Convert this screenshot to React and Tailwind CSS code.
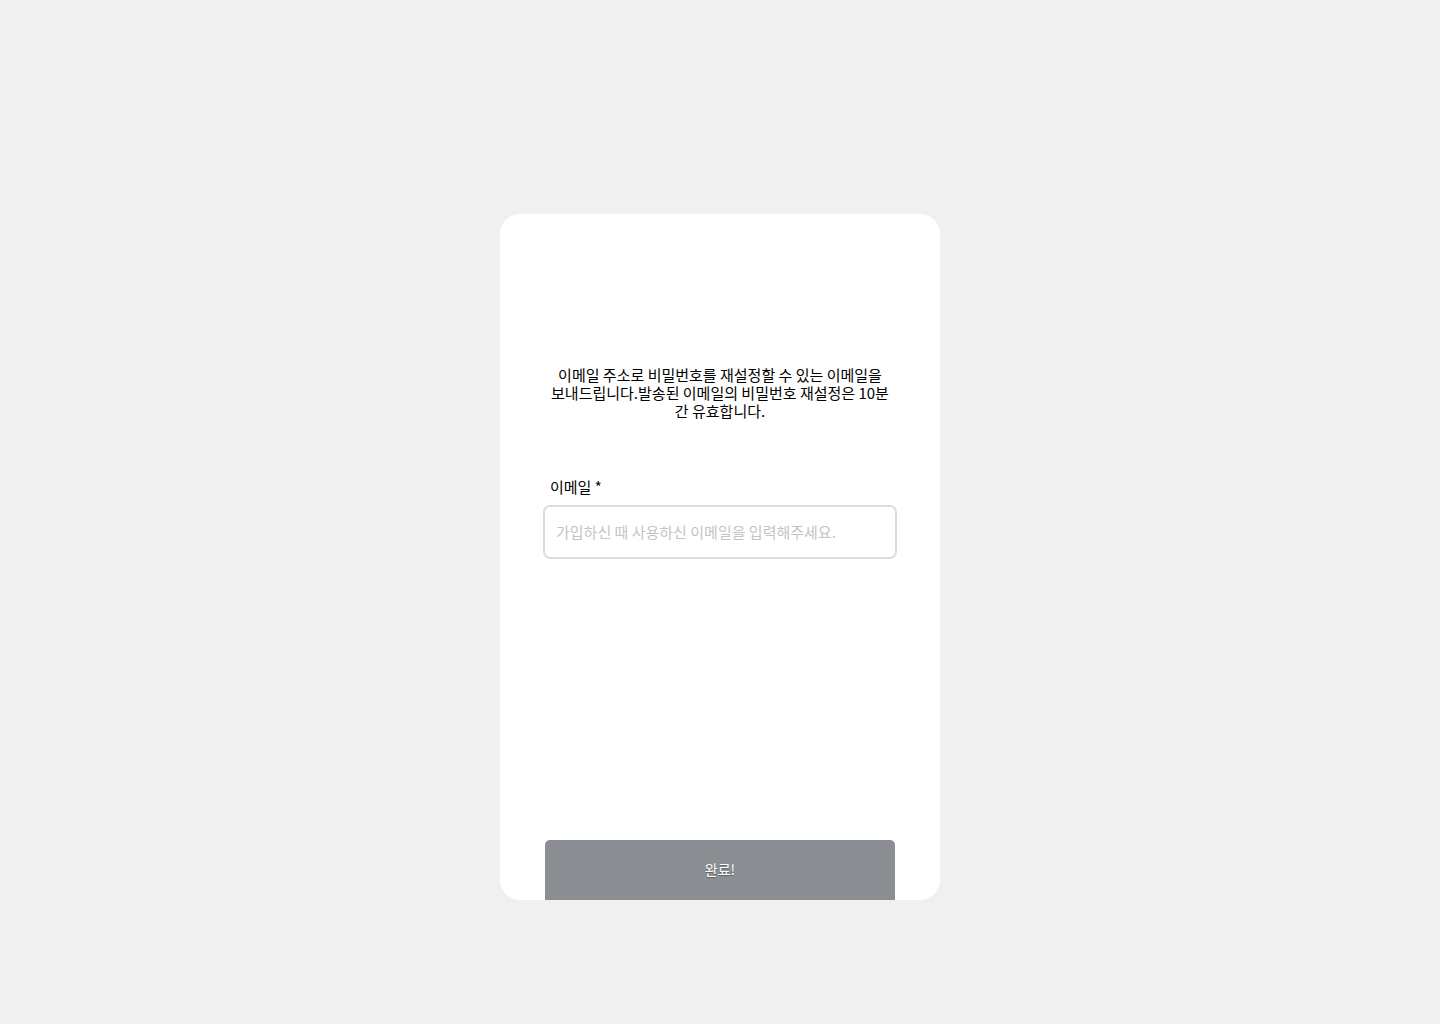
export default function App() {
  return (
    <div
      className="min-h-screen w-full bg-[#f0f0f0] pt-[214px]"
      style={{ fontFamily: '"Noto Sans CJK KR", "Noto Sans", sans-serif' }}
    >
      <div className="mx-auto flex h-[686px] w-[440px] flex-col overflow-hidden rounded-[20px] bg-white px-[45px]">
        <p className="-mx-[2px] mt-[152px] break-keep text-center text-[15px] leading-[18px] text-black">
          이메일 주소로 비밀번호를 재설정할 수 있는 이메일을 보내드립니다.발송된 이메일의 비밀번호 재설정은 10분 간 유효합니다.
        </p>

        <label className="mt-[58px] block pl-[5px] text-[15px] leading-[18px] text-black">
          이메일 *
        </label>
        <input
          type="email"
          placeholder="가입하신 때 사용하신 이메일을 입력해주세요."
          className="-mx-[2px] mt-[9px] h-[54px] rounded-[7px] border-2 border-[#dcdcdc] px-[11px] pb-[2px] text-[15px] text-black outline-none placeholder:text-[#c4c4c4]"
        />

        <div className="flex-1" />

        <button
          type="button"
          className="h-[60px] shrink-0 rounded-t-[5px] bg-[#8b8e93] pb-[2px] text-[14px] text-white [text-shadow:0_1px_1px_rgba(0,0,0,0.35)]"
        >
          완료!
        </button>
      </div>
    </div>
  );
}
